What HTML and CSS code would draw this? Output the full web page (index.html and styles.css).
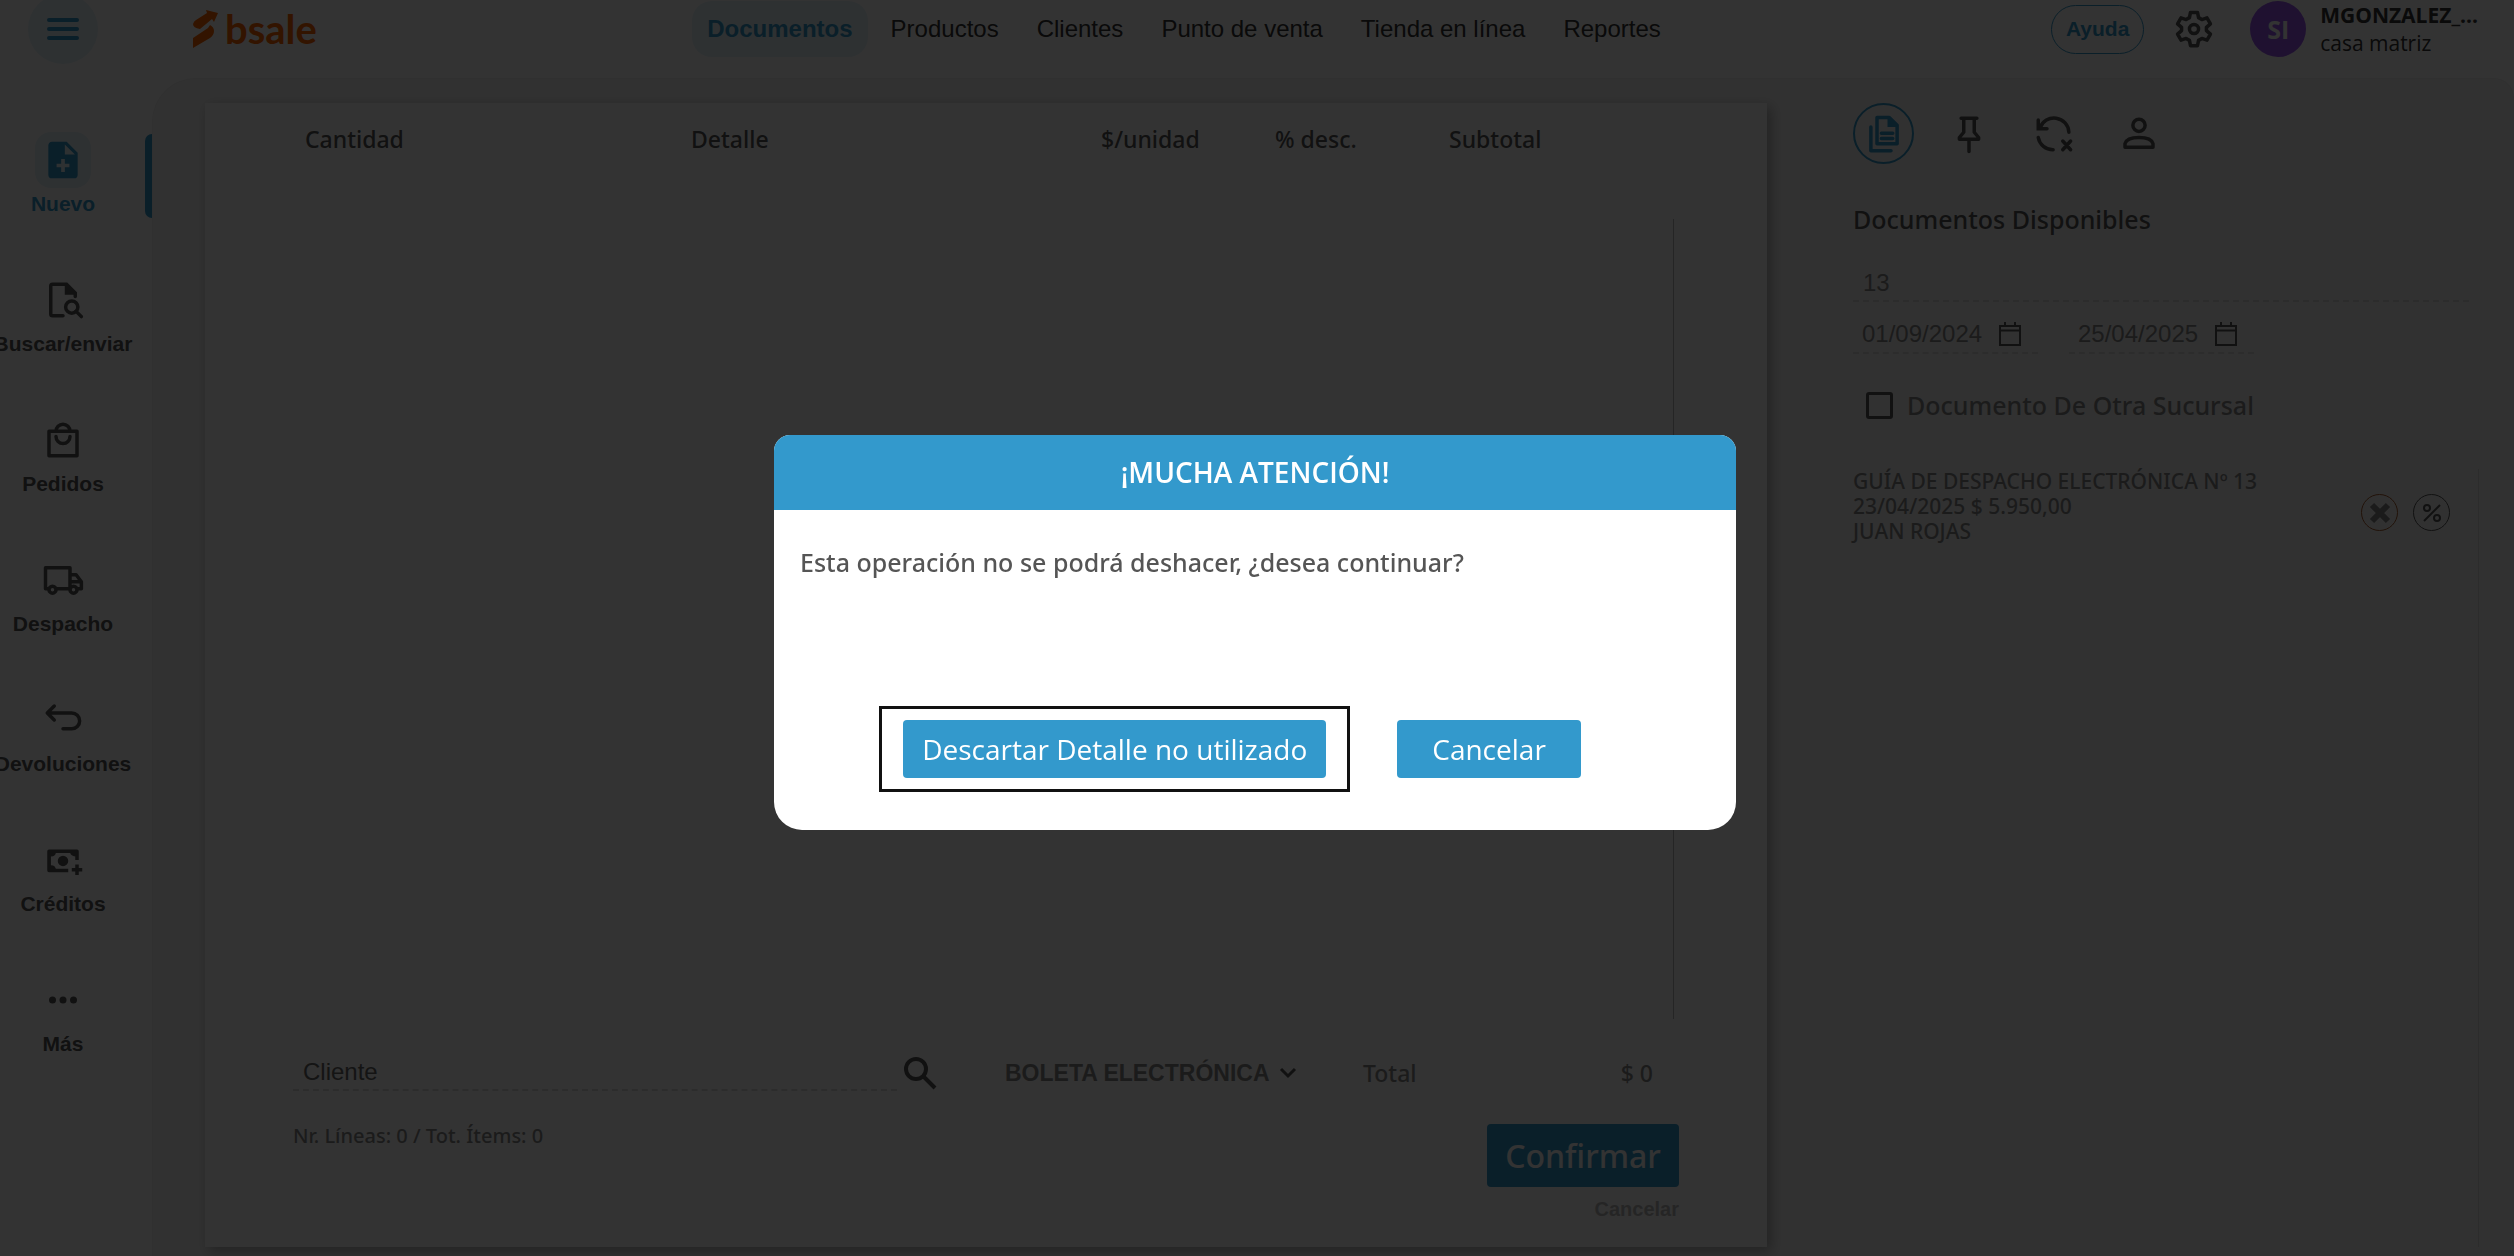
FILE: index.html
```html
<!DOCTYPE html>
<html lang="es">
<head>
    <meta charset="UTF-8">
    <meta name="viewport" content="width=device-width, initial-scale=1.0">
    <title>Bsale - Documentos</title>
    <link rel="stylesheet" href="styles.css">
</head>
<body>
    <div class="app">
        <header class="topbar">
            <div class="brand">
                <button class="menu-button" type="button" aria-label="Menú">
                    <svg viewBox="0 0 32 28" width="32" height="28"><path d="M2 5h28M2 14h28M2 23h28" fill="none" stroke="currentColor" stroke-width="4" stroke-linecap="round"/></svg>
                </button>
                <a class="logo" href="#">
                    <svg viewBox="0 0 25 38" width="25" height="38"><path d="M0 14q1-3 3-4L14 3 13 0l12 3-4 9-2-3L7 19q-7-1-7-5zM0 38V28l15-10 2-3q4 2 4 6t-4 7z" fill="currentColor"/></svg>
                    <span>bsale</span>
                </a>
            </div>
            <nav class="main-nav">
                <a class="active" href="#">Documentos</a>
                <a href="#">Productos</a>
                <a href="#">Clientes</a>
                <a href="#">Punto de venta</a>
                <a href="#">Tienda en línea</a>
                <a href="#">Reportes</a>
            </nav>
            <div class="account">
                <button class="help-button" type="button">Ayuda</button>
                <button class="icon-button" type="button" aria-label="Configuración">
                    <svg viewBox="0 0 24 24" width="42" height="42"><path d="M10 2.500h4l.6 3 1.900 1.100 2.900-1 2 3.500-2.300 2v1.800l2.300 2-2 3.500-2.900-1-1.900 1.100-.6 3h-4l-.6-3-1.900-1.100-2.900 1-2-3.500 2.300-2v-1.800l-2.300-2 2-3.500 2.900 1 1.900-1.100z" fill="none" stroke="currentColor" stroke-width="2" stroke-linejoin="round"/><circle cx="12" cy="12" r="2.600" fill="none" stroke="currentColor" stroke-width="2"/></svg>
                </button>
                <div class="user">
                    <span class="avatar">SI</span>
                    <div class="user-text">
                        <strong>MGONZALEZ_...</strong>
                        <span>casa matriz</span>
                    </div>
                </div>
            </div>
        </header>

        <div class="layout">
            <nav class="sidebar">
                <a class="side-item active" href="#">
                    <span class="side-icon"><svg viewBox="0 0 24 24" width="44" height="44"><path fill-rule="evenodd" d="M6 2h8l6 6v12a2 2 0 0 1-2 2H6a2 2 0 0 1-2-2V4c0-1.100.9-2 2-2zm7 1.500V9h5.500zM11 11.500V14H8.500v2H11v2.500h2V16h2.500v-2H13v-2.500z" fill="currentColor"/></svg></span>
                    <span>Nuevo</span>
                </a>
                <a class="side-item" href="#">
                    <span class="side-icon"><svg viewBox="0 0 24 24" width="42" height="42"><path d="M12 21H6a1 1 0 0 1-1-1V4a1 1 0 0 1 1-1h8l5 5v2" fill="none" stroke="currentColor" stroke-width="2" stroke-linecap="round"/><path d="M13 2.500 19.500 9H13z" fill="currentColor"/><circle cx="17" cy="16" r="3.500" fill="none" stroke="currentColor" stroke-width="2"/><path d="m19.500 18.500 3 3" stroke="currentColor" stroke-width="2" stroke-linecap="round"/></svg></span>
                    <span>Buscar/enviar</span>
                </a>
                <a class="side-item" href="#">
                    <span class="side-icon"><svg viewBox="0 0 24 24" width="42" height="42"><path d="M4 7h16v14H4zM8 7a4 4 0 0 1 8 0M8 10a4 4 0 0 0 8 0" fill="none" stroke="currentColor" stroke-width="2" stroke-linejoin="round" stroke-linecap="round"/></svg></span>
                    <span>Pedidos</span>
                </a>
                <a class="side-item" href="#">
                    <span class="side-icon"><svg viewBox="0 0 24 24" width="42" height="42"><path d="M4 17H2V5h14v12H8M16 9h3.500l3 4v4H20M16 17h-1M16 13h6" fill="none" stroke="currentColor" stroke-width="2" stroke-linejoin="round"/><circle cx="6" cy="17.500" r="2" fill="none" stroke="currentColor" stroke-width="2"/><circle cx="18" cy="17.500" r="2" fill="none" stroke="currentColor" stroke-width="2"/></svg></span>
                    <span>Despacho</span>
                </a>
                <a class="side-item" href="#">
                    <span class="side-icon"><svg viewBox="0 0 24 24" width="42" height="42"><path d="M7 4 3 8l4 4M3 8h14a4.500 4.500 0 0 1 0 9h-5" fill="none" stroke="currentColor" stroke-width="2" stroke-linecap="round" stroke-linejoin="round"/></svg></span>
                    <span>Devoluciones</span>
                </a>
                <a class="side-item" href="#">
                    <span class="side-icon"><svg viewBox="0 0 24 24" width="42" height="42"><path d="M15 18H4V7h16v5" fill="none" stroke="currentColor" stroke-width="2" stroke-linejoin="round"/><path d="M4 7h4q0 3-3 3v5q3 0 3 3H4zM20 7h-4q0 3 4 3z" fill="currentColor"/><circle cx="12" cy="12.500" r="3" fill="currentColor"/><path d="M20 14.500v6M17 17.500h6" stroke="currentColor" stroke-width="2"/></svg></span>
                    <span>Créditos</span>
                </a>
                <a class="side-item" href="#">
                    <span class="side-icon"><svg viewBox="0 0 24 24" width="42" height="42" fill="currentColor"><circle cx="6" cy="12" r="2"/><circle cx="12" cy="12" r="2"/><circle cx="18" cy="12" r="2"/></svg></span>
                    <span>Más</span>
                </a>
            </nav>

            <main class="workspace">
                <section class="sheet">
                    <table class="lines">
                        <thead>
                            <tr>
                                <th class="col-qty">Cantidad</th>
                                <th class="col-detail">Detalle</th>
                                <th class="col-unit">$/unidad</th>
                                <th class="col-discount">% desc.</th>
                                <th class="col-subtotal">Subtotal</th>
                            </tr>
                        </thead>
                    </table>
                    <div class="lines-body"></div>
                    <div class="sale-row">
                        <input class="line-input client" type="text" placeholder="Cliente" aria-label="Cliente">
                        <button class="icon-button search" type="button" aria-label="Buscar cliente">
                            <svg viewBox="0 0 34 34" width="34" height="34"><circle cx="13" cy="13" r="10" fill="none" stroke="currentColor" stroke-width="4"/><path d="m20 20 12 12" stroke="currentColor" stroke-width="4"/></svg>
                        </button>
                        <div class="doc-type">
                            <select aria-label="Tipo de documento">
                                <option>BOLETA ELECTRÓNICA</option>
                            </select>
                            <svg viewBox="0 0 18 12" width="18" height="12"><path d="m2 2 7 7 7-7" fill="none" stroke="currentColor" stroke-width="3"/></svg>
                        </div>
                        <div class="total"><span>Total</span><span>$ 0</span></div>
                    </div>
                    <div class="sale-footer">
                        <span class="counter">Nr. Líneas: 0 / Tot. Ítems: 0</span>
                        <div class="sale-actions">
                            <button class="confirm" type="button">Confirmar</button>
                            <a class="cancel-link" href="#">Cancelar</a>
                        </div>
                    </div>
                </section>

                <aside class="panel">
                    <div class="panel-tabs">
                        <button class="tab active" type="button" aria-label="Documentos disponibles">
                            <svg viewBox="0 0 24 24" width="42" height="42"><path d="M8 2.500h7l4.500 4.500v10.500H8zM4.500 8v13.500H16M10.500 11.500h6.500M10.500 14.500h6.500" fill="none" stroke="currentColor" stroke-width="2" stroke-linejoin="round" stroke-linecap="round"/><path d="M14 2v6h6z" fill="currentColor"/></svg>
                        </button>
                        <button class="tab" type="button" aria-label="Fijar">
                            <svg viewBox="0 0 24 24" width="42" height="42"><path d="M7.500 3h9M9 3v8l-2.500 3v1h11v-1L15 11V3M12 15v7" fill="none" stroke="currentColor" stroke-width="2" stroke-linecap="round" stroke-linejoin="round"/></svg>
                        </button>
                        <button class="tab" type="button" aria-label="Descartar">
                            <svg viewBox="0 0 24 24" width="42" height="42"><path d="M3 4v5h5M4 8.500A8.500 8.500 0 0 1 20.500 11M3 14a8.500 8.500 0 0 0 8.500 7M17 16l4.500 5M21.500 16l-4.500 5" fill="none" stroke="currentColor" stroke-width="2" stroke-linecap="round"/></svg>
                        </button>
                        <button class="tab" type="button" aria-label="Cliente">
                            <svg viewBox="0 0 24 24" width="42" height="42"><circle cx="12" cy="7" r="3.500" fill="none" stroke="currentColor" stroke-width="2"/><path d="M4 19.500v-2q1-3.500 8-3.500t8 3.500v2z" fill="none" stroke="currentColor" stroke-width="2" stroke-linejoin="round"/></svg>
                        </button>
                    </div>
                    <h2>Documentos Disponibles</h2>
                    <input class="line-input number" type="text" value="13" aria-label="Número de documento">
                    <div class="dates">
                        <label class="date">
                            <input type="text" value="01/09/2024" aria-label="Desde">
                            <svg viewBox="0 0 22 24" width="22" height="24"><path d="M1 4h20v19H1zM1 8.500h20M6 0v4M16 0v4" fill="none" stroke="currentColor" stroke-width="2"/></svg>
                        </label>
                        <label class="date">
                            <input type="text" value="25/04/2025" aria-label="Hasta">
                            <svg viewBox="0 0 22 24" width="22" height="24"><path d="M1 4h20v19H1zM1 8.500h20M6 0v4M16 0v4" fill="none" stroke="currentColor" stroke-width="2"/></svg>
                        </label>
                    </div>
                    <label class="branch">
                        <input type="checkbox">
                        <span>Documento De Otra Sucursal</span>
                    </label>
                    <ul class="documents">
                        <li>
                            <p>GUÍA DE DESPACHO ELECTRÓNICA Nº 13<br>23/04/2025 $ 5.950,00<br>JUAN ROJAS</p>
                            <div class="doc-actions">
                                <button class="round discard" type="button" aria-label="Descartar">
                                    <svg viewBox="0 0 22 22" width="22" height="22"><path d="m3 3 16 16M19 3 3 19" stroke="currentColor" stroke-width="6"/></svg>
                                </button>
                                <button class="round" type="button" aria-label="Descuento">
                                    <svg viewBox="0 0 22 22" width="22" height="22" fill="none" stroke="currentColor" stroke-width="2"><path d="M19 3 3 19"/><circle cx="6" cy="6" r="3"/><circle cx="16" cy="16" r="3"/></svg>
                                </button>
                            </div>
                        </li>
                    </ul>
                </aside>
            </main>
        </div>
    </div>

    <!-- Confirmation popup -->
    <div class="overlay">
        <div class="modal" role="dialog" aria-modal="true" aria-labelledby="modalTitle">
            <h1 id="modalTitle">¡MUCHA ATENCIÓN!</h1>
            <p>Esta operación no se podrá deshacer, ¿desea continuar?</p>
            <div class="modal-actions">
                <div class="highlight"><button type="button">Descartar Detalle no utilizado</button></div>
                <button class="modal-cancel" type="button">Cancelar</button>
            </div>
        </div>
    </div>
</body>
</html>
```
FILE: styles.css
```css
* {
    box-sizing: border-box;
}

body {
    margin: 0;
    font-family: "Noto Sans", "Open Sans", sans-serif;
    font-size: 25px;
    color: #555;
    background-color: #fff;
    overflow: hidden;
}

a {
    color: inherit;
    text-decoration: none;
}

button,
input,
select {
    font: inherit;
    color: inherit;
    background: none;
    border: none;
    padding: 0;
    margin: 0;
}

button {
    cursor: pointer;
}

svg {
    display: block;
    flex: none;
}

.app {
    min-height: 100vh;
    display: flex;
    flex-direction: column;
}

/* Top bar */
.topbar {
    height: 78px;
    padding: 0 36px 20px 28px;
    display: flex;
    justify-content: space-between;
    align-items: center;
}

.brand,
.account,
.user,
.logo {
    display: flex;
    align-items: center;
}

.brand {
    height: 58px;
    gap: 95px;
}

.menu-button {
    width: 70px;
    height: 70px;
    border-radius: 50%;
    background-color: #e6f4fa;
    color: #3399cc;
    display: flex;
    align-items: center;
    justify-content: center;
}

.logo {
    gap: 7px;
    color: #ff6600;
    font-family: Lato, sans-serif;
    font-size: 40px;
    font-weight: 700;
    line-height: 40px;
}

.main-nav {
    display: flex;
    gap: 8px;
    font-family: "Liberation Sans", Arial, sans-serif;
    font-size: 24px;
    color: #333;
}

.main-nav a {
    padding: 0 15px;
    line-height: 56px;
    border-radius: 20px;
}

.main-nav .active {
    background-color: #e6f4fa;
    color: #3399cc;
    font-weight: 700;
}

.help-button {
    width: 93px;
    height: 49px;
    border: 1px solid #3399cc;
    border-radius: 25px;
    color: #3399cc;
    font-family: "Liberation Sans", Arial, sans-serif;
    font-size: 21px;
    font-weight: 700;
    margin-right: 29px;
}

.icon-button {
    color: #555;
}

.user {
    gap: 14px;
    margin-left: 35px;
    font-family: "Open Sans", sans-serif;
    color: #333;
}

.avatar {
    width: 56px;
    height: 56px;
    border-radius: 50%;
    background-color: #9955ee;
    color: #fff;
    font-weight: 700;
    line-height: 56px;
    text-align: center;
}

.user-text {
    display: flex;
    flex-direction: column;
    font-size: 21px;
    line-height: 28px;
}

/* Sidebar */
.layout {
    flex: 1;
    display: flex;
}

.sidebar {
    width: 152px;
    flex: none;
    padding-top: 54px;
    font-family: "Liberation Sans", Arial, sans-serif;
    font-size: 21px;
    font-weight: 700;
}

.side-item {
    position: relative;
    height: 140px;
    padding-right: 26px;
    display: flex;
    flex-direction: column;
    align-items: center;
    gap: 4px;
    line-height: 24px;
}

.side-icon {
    width: 56px;
    height: 56px;
    border-radius: 16px;
    display: flex;
    align-items: center;
    justify-content: center;
}

.side-item.active {
    color: #3399cc;
}

.side-item.active .side-icon {
    background-color: #e6f4fa;
}

.side-item.active::after {
    content: "";
    position: absolute;
    top: 2px;
    right: 0;
    width: 7px;
    height: 84px;
    border-radius: 7px 0 0 7px;
    background-color: #3399cc;
}

/* Work area */
.workspace {
    flex: 1;
    min-width: 0;
    display: flex;
    padding: 24px 34px 9px 52px;
    border: 1px solid #eee;
    border-bottom: none;
    border-radius: 44px 20px 0 0;
    background-color: #f5f5f5;
}

.sheet {
    flex: 1;
    min-width: 0;
    padding: 18px 88px 26px 88px;
    display: flex;
    flex-direction: column;
    background-color: #fff;
    box-shadow: 4px 4px 12px rgba(0, 0, 0, 0.3);
}

.lines {
    width: 100%;
    table-layout: fixed;
    border-collapse: collapse;
    font-size: 23px;
    line-height: 36px;
    text-align: left;
}

.lines th {
    padding: 0;
    font-weight: 500;
}

.lines .col-qty {
    padding-left: 12px;
}

.lines .col-detail {
    width: 410px;
}

.lines .col-unit,
.lines .col-discount {
    width: 174px;
}

.lines .col-subtotal {
    width: 230px;
}

.lines-body {
    flex: 1;
    margin: 62px 5px 36px 0;
    border-right: 1px solid #bbb;
}

.line-input {
    padding: 0 10px;
    border-bottom: 2px dashed #ddd;
    font-family: "Liberation Sans", Arial, sans-serif;
    font-size: 24px;
    color: #888;
}

.line-input::placeholder {
    color: #666;
    opacity: 1;
}

.sale-row {
    display: flex;
    align-items: center;
    padding-right: 26px;
    line-height: 36px;
}

.client {
    flex: 1;
    min-width: 0;
    height: 36px;
}

.search {
    margin-left: 6px;
}

.doc-type {
    display: flex;
    align-items: center;
    gap: 8px;
    margin-left: 68px;
    font-family: "Liberation Sans", Arial, sans-serif;
    font-size: 23px;
    font-weight: 700;
}

.doc-type select {
    appearance: none;
    color: #888;
}

.total {
    display: flex;
    justify-content: space-between;
    width: 290px;
    margin-left: 66px;
    font-size: 23px;
    font-weight: 500;
    color: #888;
}

.sale-footer {
    display: flex;
    justify-content: space-between;
    margin-top: 33px;
}

.counter {
    font-size: 20px;
    line-height: 24px;
    font-weight: 500;
    color: #888;
}

.sale-actions {
    display: flex;
    flex-direction: column;
    align-items: flex-end;
    gap: 10px;
}

.confirm {
    width: 192px;
    height: 63px;
    border-radius: 4px;
    background-color: #3399cc;
    color: #fff;
    font-size: 32px;
    font-weight: 500;
}

.cancel-link {
    font-family: "Liberation Sans", Arial, sans-serif;
    font-size: 20px;
    font-weight: 700;
    line-height: 24px;
    color: #bbb;
}

/* Right panel */
.panel {
    width: 712px;
    flex: none;
    padding-left: 86px;
    display: flex;
    flex-direction: column;
}

.panel-tabs {
    display: flex;
    gap: 24px;
}

.tab {
    width: 61px;
    height: 61px;
    border-radius: 50%;
    display: flex;
    align-items: center;
    justify-content: center;
}

.tab.active {
    border: 2px solid #3399cc;
    color: #3399cc;
}

.panel h2 {
    margin: 37px 0 0;
    font-size: 25px;
    line-height: 36px;
    font-weight: 500;
}

.number {
    height: 36px;
    margin: 29px 10px 0 0;
}

.dates {
    display: flex;
    gap: 31px;
    margin-top: 14px;
}

.date {
    width: 185px;
    height: 38px;
    padding-left: 9px;
    display: flex;
    align-items: center;
    gap: 12px;
    border-bottom: 2px dashed #ddd;
    font-family: "Liberation Sans", Arial, sans-serif;
    font-size: 24px;
}

.date input {
    width: 125px;
    color: #888;
}

.branch {
    display: flex;
    align-items: center;
    gap: 14px;
    margin: 33px 0 0 13px;
    line-height: 36px;
    font-weight: 500;
    color: #888;
}

.branch input {
    appearance: none;
    width: 27px;
    height: 27px;
    border: 3px solid #555;
    border-radius: 3px;
}

.documents {
    flex: 1;
    list-style: none;
    margin: 46px 0 0;
    padding: 0;
    border-right: 1px solid #ddd;
}

.documents li {
    display: flex;
    justify-content: space-between;
    padding-right: 28px;
}

.documents p {
    margin: 0;
    font-size: 21px;
    line-height: 25px;
    font-weight: 500;
    color: #888;
}

.doc-actions {
    display: flex;
    gap: 15px;
    padding-top: 25px;
}

.round {
    width: 37px;
    height: 37px;
    border: 1px solid #555;
    border-radius: 50%;
    display: flex;
    align-items: center;
    justify-content: center;
}

.round.discard {
    border-color: #a65a2a;
    color: #888;
}

/* Confirmation popup */
.overlay {
    position: fixed;
    inset: 0;
    z-index: 10;
    padding: 9px 4px 0 0;
    display: flex;
    align-items: center;
    justify-content: center;
    background-color: rgba(0, 0, 0, 0.8);
}

.modal {
    width: 962px;
    border-radius: 16px 16px 28px 28px;
    overflow: hidden;
    background-color: #fff;
}

.modal h1 {
    margin: 0;
    background-color: #3399cc;
    color: #fff;
    font-family: "Open Sans", sans-serif;
    font-size: 28px;
    font-weight: 600;
    line-height: 75px;
    text-align: center;
}

.modal p {
    margin: 0;
    padding: 34px 26px 0;
    line-height: 36px;
    font-weight: 500;
}

.modal-actions {
    display: flex;
    align-items: center;
    justify-content: center;
    gap: 47px;
    padding: 126px 50px 38px 0;
    font-family: "Open Sans", sans-serif;
}

.modal-actions button {
    height: 58px;
    padding: 0 19px;
    border-radius: 4px;
    background-color: #3399cc;
    color: #fff;
    font-size: 28px;
}

.highlight {
    padding: 11px 21px;
    border: 3px solid #111;
}

.modal-actions .modal-cancel {
    padding: 0 35px;
}
```
